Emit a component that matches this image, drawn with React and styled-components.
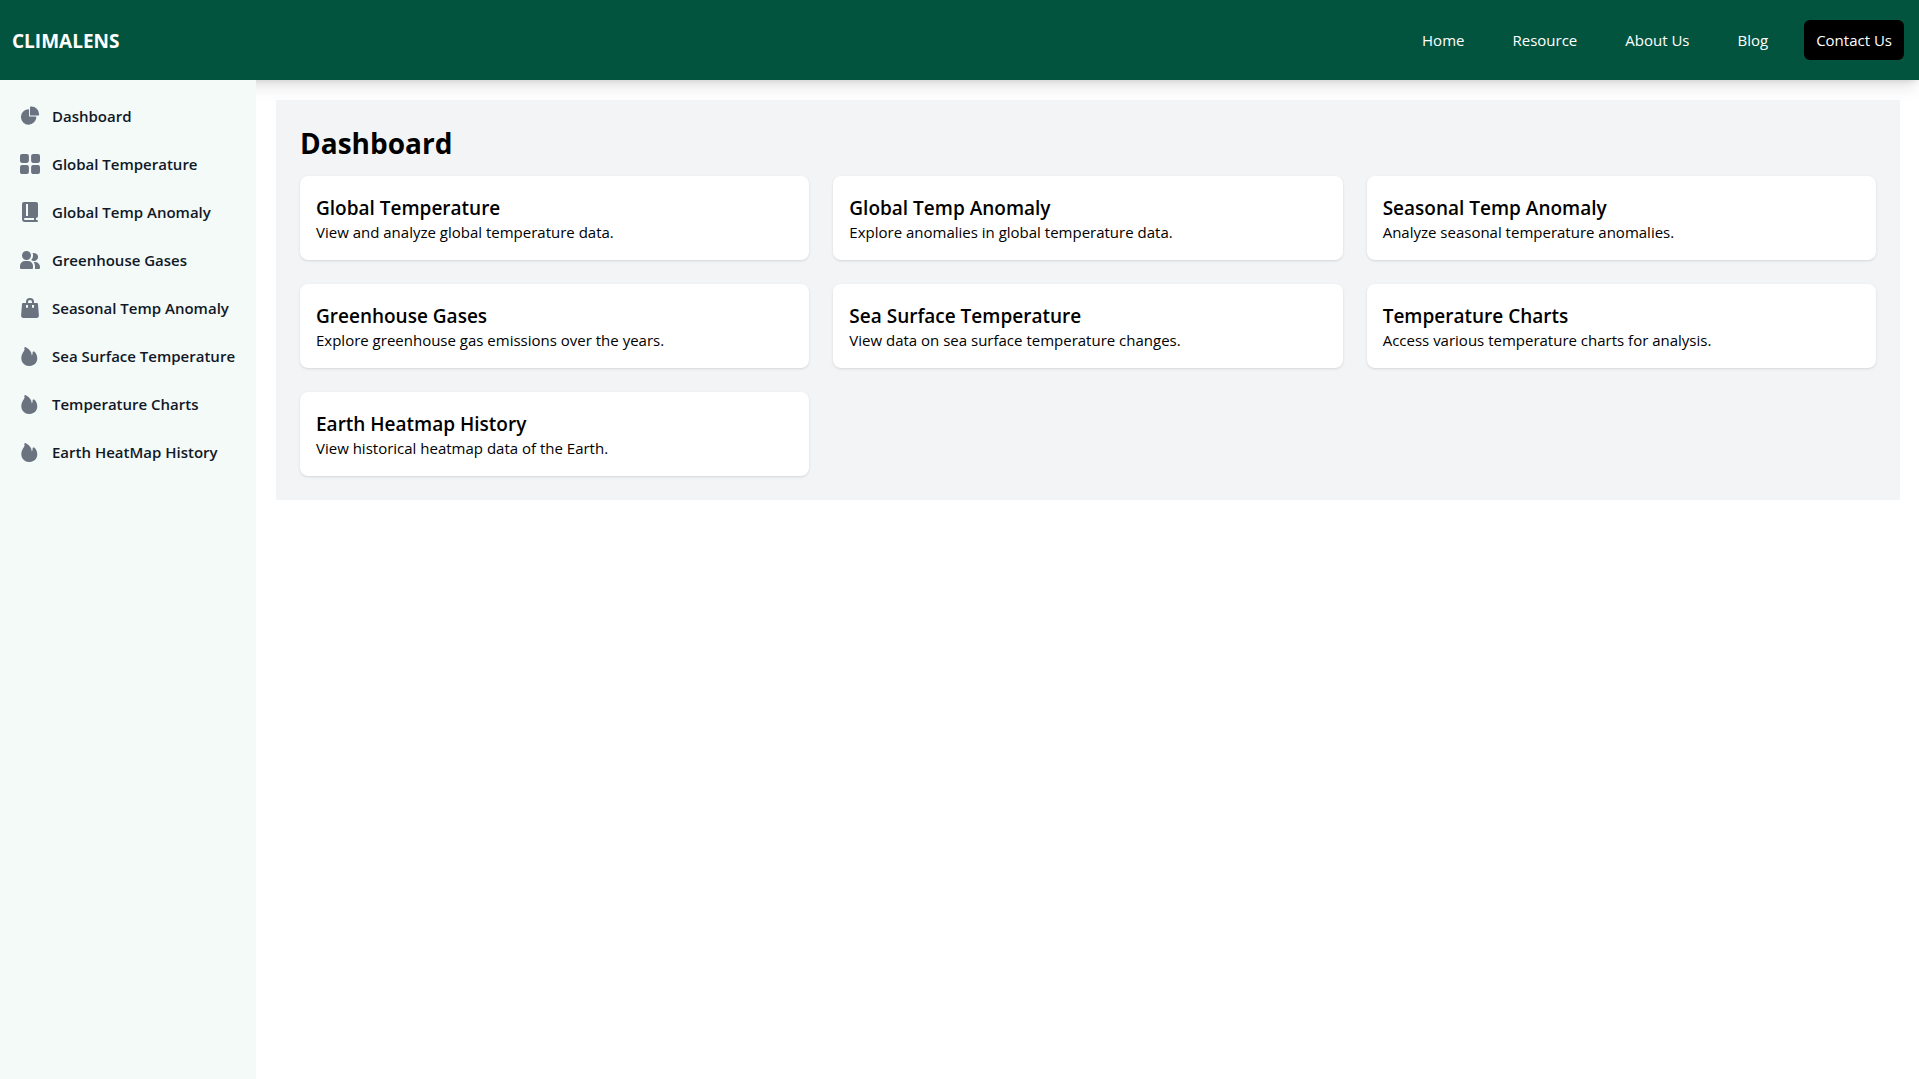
import React from "react";
import styled, { createGlobalStyle } from "styled-components";

const GlobalStyle = createGlobalStyle`
  *, *::before, *::after { box-sizing: border-box; }
  body {
    margin: 0;
    background: #fff;
    color: #000;
    font: 400 15px/24px "Open Sans", "Noto Sans", sans-serif;
  }
  h1, h2, p, ul { margin: 0; padding: 0; }
  ul { list-style: none; }
  a { color: inherit; text-decoration: none; }
`;

const Page = styled.div`
  display: flex;
  flex-direction: column;
  min-height: 100vh;
`;

const Header = styled.header`
  display: flex;
  align-items: center;
  justify-content: space-between;
  height: 80px;
  padding: 0 15px 0 12px;
  background: #03543f;
  color: #fff;
  box-shadow: 0 10px 15px -3px rgba(0, 0, 0, 0.1), 0 4px 6px -4px rgba(0, 0, 0, 0.1),
    0 0 10px rgba(0, 0, 0, 0.06);
`;

const Brand = styled.a`
  padding-top: 2px;
  font-size: 19px;
  font-weight: 700;
  line-height: 28px;
`;

const NavList = styled.ul`
  display: flex;
  align-items: center;
  gap: 24px;
`;

const NavLink = styled.a`
  display: block;
  padding: 8px 12px;
  border-radius: 6px;
  background: ${(p) => (p.$filled ? "#000" : "transparent")};
`;

const Body = styled.div`
  display: flex;
  flex: 1;
`;

const Sidebar = styled.aside`
  position: relative;
  flex: none;
  width: 256px;
  padding: 16px 12px;
  background: #f3faf7;
`;

const SideList = styled.ul`
  display: flex;
  flex-direction: column;
  gap: 8px;
`;

const SideLink = styled.a`
  display: flex;
  align-items: center;
  gap: 12px;
  height: 40px;
  padding: 0 8px;
  color: #111827;
  font-weight: 600;
  white-space: nowrap;
`;

const Icon = styled.svg`
  flex: none;
  width: 20px;
  height: 20px;
  fill: #6b7280;
`;

const Main = styled.main`
  flex: 1;
  min-width: 0;
  padding: 20px 19px 20px 20px;
`;

const Panel = styled.section`
  padding: 24px;
  background: #f3f4f6;
`;

const Title = styled.h1`
  margin-bottom: 14px;
  font-size: 28px;
  font-weight: 700;
  line-height: 38px;
`;

const CardGrid = styled.div`
  display: grid;
  grid-template-columns: repeat(3, minmax(0, 1fr));
  gap: 24px;
`;

const Card = styled.a`
  display: block;
  padding: 20px 16px 16px;
  border-radius: 8px;
  background: #fff;
  box-shadow: 0 1px 3px rgba(0, 0, 0, 0.1), 0 1px 2px -1px rgba(0, 0, 0, 0.1);
`;

const CardTitle = styled.h2`
  font-size: 19px;
  font-weight: 600;
  line-height: 24px;
`;

const CardText = styled.p`
  font-weight: 400;
`;

const icons = {
  pie: {
    box: "0 0 22 21",
    d: "M16.975 11H10V4.025a1 1 0 0 0-1.066-.998 8.5 8.5 0 1 0 9.039 9.039.999.999 0 0 0-1-1.066h.002Z M12.5 0c-.157 0-.311.01-.565.027A1 1 0 0 0 11 1.02V10h8.975a1 1 0 0 0 1-.935c.013-.188.028-.374.028-.565A8.51 8.51 0 0 0 12.5 0Z",
  },
  grid: {
    box: "0 0 18 18",
    d: "M6.143 0H1.857A1.857 1.857 0 0 0 0 1.857v4.286C0 7.169.831 8 1.857 8h4.286A1.857 1.857 0 0 0 8 6.143V1.857A1.857 1.857 0 0 0 6.143 0Zm10 0h-4.286A1.857 1.857 0 0 0 10 1.857v4.286C10 7.169 10.831 8 11.857 8h4.286A1.857 1.857 0 0 0 18 6.143V1.857A1.857 1.857 0 0 0 16.143 0Zm-10 10H1.857A1.857 1.857 0 0 0 0 11.857v4.286C0 17.169.831 18 1.857 18h4.286A1.857 1.857 0 0 0 8 16.143v-4.286A1.857 1.857 0 0 0 6.143 10Zm10 0h-4.286A1.857 1.857 0 0 0 10 11.857v4.286c0 1.026.831 1.857 1.857 1.857h4.286A1.857 1.857 0 0 0 18 16.143v-4.286A1.857 1.857 0 0 0 16.143 10Z",
  },
  book: {
    box: "0 0 16 20",
    d: "M16 14V2a2 2 0 0 0-2-2H2a2 2 0 0 0-2 2v15a3 3 0 0 0 3 3h12a1 1 0 0 0 0-2h-1v-2a2 2 0 0 0 2-2ZM4 2h2v12H4V2Zm8 16H3a1 1 0 0 1 0-2h9v2Z",
  },
  users: {
    box: "0 0 20 18",
    d: "M14 2a3.963 3.963 0 0 0-1.4.267 6.439 6.439 0 0 1-1.331 6.638A4 4 0 1 0 14 2Zm1 9h-1.264A6.957 6.957 0 0 1 15 15v2a2.97 2.97 0 0 1-.184 1H19a1 1 0 0 0 1-1v-1a5.006 5.006 0 0 0-5-5ZM6.5 9a4.5 4.5 0 1 0 0-9 4.5 4.5 0 0 0 0 9ZM8 10H5a5.006 5.006 0 0 0-5 5v2a1 1 0 0 0 1 1h11a1 1 0 0 0 1-1v-2a5.006 5.006 0 0 0-5-5Z",
  },
  bag: {
    box: "0 0 18 20",
    d: "M17 5.923A1 1 0 0 0 16 5h-3V4a4 4 0 1 0-8 0v1H2a1 1 0 0 0-1 .923L.086 17.846A2 2 0 0 0 2.08 20h13.84a2 2 0 0 0 1.994-2.153L17 5.923ZM7 9a1 1 0 0 1-2 0V7h2v2Zm0-5a2 2 0 1 1 4 0v1H7V4Zm6 5a1 1 0 1 1-2 0V7h2v2Z",
  },
  flame: {
    box: "2.7 2 20 20",
    d: "M8.597 3.2A1 1 0 0 0 7.04 4.289a3.49 3.49 0 0 1 .057 1.795 3.448 3.448 0 0 1-.84 1.575.999.999 0 0 0-.077.094c-.596.817-3.96 5.6-.941 10.762l.03.049a7.73 7.73 0 0 0 2.917 2.602 7.617 7.617 0 0 0 3.772.829 8.06 8.06 0 0 0 3.986-.975 8.185 8.185 0 0 0 3.04-2.864c1.301-2.2 1.184-4.556.588-6.441-.583-1.848-1.68-3.414-2.607-4.102a1 1 0 0 0-1.594.757c-.067 1.431-.363 2.551-.794 3.431-.222-2.407-1.127-4.196-2.224-5.524-1.147-1.39-2.564-2.3-3.323-2.788a8.487 8.487 0 0 1-.432-.287Z",
  },
};

const navItems = ["Home", "Resource", "About Us", "Blog", "Contact Us"];

const sideItems = [
  ["pie", "Dashboard"],
  ["grid", "Global Temperature"],
  ["book", "Global Temp Anomaly"],
  ["users", "Greenhouse Gases"],
  ["bag", "Seasonal Temp Anomaly"],
  ["flame", "Sea Surface Temperature"],
  ["flame", "Temperature Charts"],
  ["flame", "Earth HeatMap History"],
];

const cards = [
  ["Global Temperature", "View and analyze global temperature data."],
  ["Global Temp Anomaly", "Explore anomalies in global temperature data."],
  ["Seasonal Temp Anomaly", "Analyze seasonal temperature anomalies."],
  ["Greenhouse Gases", "Explore greenhouse gas emissions over the years."],
  ["Sea Surface Temperature", "View data on sea surface temperature changes."],
  ["Temperature Charts", "Access various temperature charts for analysis."],
  ["Earth Heatmap History", "View historical heatmap data of the Earth."],
];

export default function App() {
  return (
    <Page>
      <GlobalStyle />
      <Header>
        <Brand href="#">CLIMALENS</Brand>
        <nav>
          <NavList>
            {navItems.map((name) => (
              <li key={name}>
                <NavLink href="#" $filled={name === "Contact Us"}>{name}</NavLink>
              </li>
            ))}
          </NavList>
        </nav>
      </Header>
      <Body>
        <Sidebar>
          <SideList>
            {sideItems.map(([icon, name]) => (
              <li key={name}>
                <SideLink href="#">
                  <Icon viewBox={icons[icon].box} aria-hidden="true">
                    <path d={icons[icon].d} />
                  </Icon>
                  <span>{name}</span>
                </SideLink>
              </li>
            ))}
          </SideList>
        </Sidebar>
        <Main>
          <Panel>
            <Title>Dashboard</Title>
            <CardGrid>
              {cards.map(([name, text]) => (
                <Card href="#" key={name}>
                  <CardTitle>{name}</CardTitle>
                  <CardText>{text}</CardText>
                </Card>
              ))}
            </CardGrid>
          </Panel>
        </Main>
      </Body>
    </Page>
  );
}
